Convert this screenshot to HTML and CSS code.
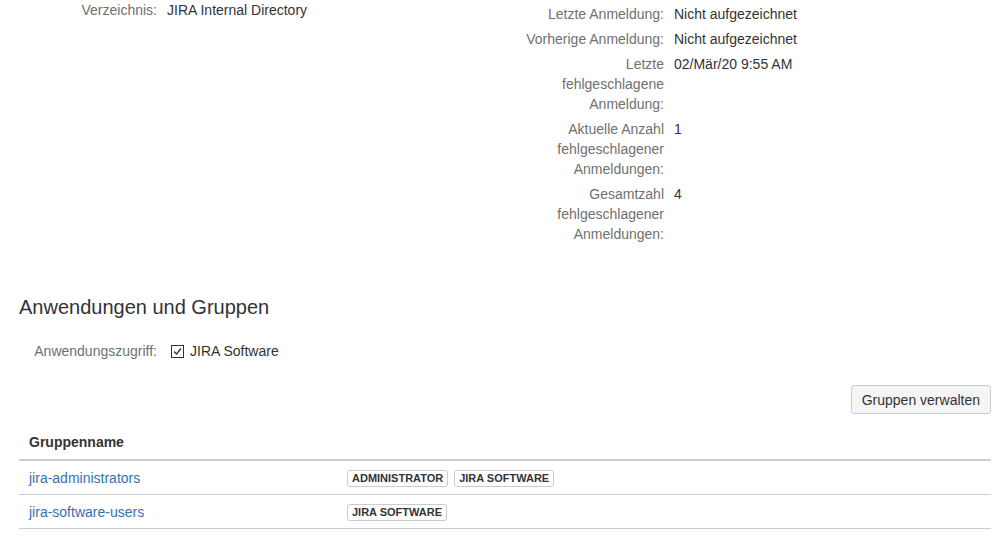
FILE: index.html
```html
<!DOCTYPE html>
<html lang="de">
<head>
  <meta charset="UTF-8" />
  <title>Benutzer</title>
  <link rel="stylesheet" href="styles.css">
</head>
<body>

  <div class="details">
    <div class="detail-col detail-left">
      <div class="detail-label">Verzeichnis:</div>
      <div class="detail-value">JIRA Internal Directory</div>
    </div>

    <div class="detail-col detail-right">
      <div class="detail-label">Letzte Anmeldung:</div>
      <div class="detail-value">Nicht aufgezeichnet</div>

      <div class="detail-label">Vorherige Anmeldung:</div>
      <div class="detail-value">Nicht aufgezeichnet</div>

      <div class="detail-label">Letzte fehlgeschlagene Anmeldung:</div>
      <div class="detail-value">02/Mär/20 9:55 AM</div>

      <div class="detail-label">Aktuelle Anzahl fehlgeschlagener Anmeldungen:</div>
      <div class="detail-value">1</div>

      <div class="detail-label">Gesamtzahl fehlgeschlagener Anmeldungen:</div>
      <div class="detail-value">4</div>
    </div>
  </div>

  <h2 class="section-title">Anwendungen und Gruppen</h2>

  <div class="access-row">
    <div class="detail-label">Anwendungszugriff:</div>
    <div class="detail-value">
      <span class="checkbox">
        <svg width="13" height="13" viewBox="0 0 13 13">
          <rect x="0.5" y="0.5" width="12" height="12" fill="#fff" stroke="#333" />
          <path d="M3 6.5 L5.5 9 L10 3.5" fill="none" stroke="#333" stroke-width="1.3" />
        </svg>
      </span>
      JIRA Software
    </div>
  </div>

  <div class="toolbar">
    <button class="btn">Gruppen verwalten</button>
  </div>

  <table class="groups">
    <thead>
      <tr>
        <th class="col-name">Gruppenname</th>
        <th></th>
      </tr>
    </thead>
    <tbody>
      <tr>
        <td><a href="#">jira-administrators</a></td>
        <td>
          <span class="lozenge">Administrator</span>
          <span class="lozenge">JIRA Software</span>
        </td>
      </tr>
      <tr>
        <td><a href="#">jira-software-users</a></td>
        <td>
          <span class="lozenge">JIRA Software</span>
        </td>
      </tr>
    </tbody>
  </table>

</body>
</html>
```

FILE: styles.css
```css
body {
  margin: 0;
  padding: 0 8px 0 19px;
  font-family: 'Liberation Sans', Arial, sans-serif;
  font-size: 14px;
  line-height: 20px;
  color: #333;
  background: #fff;
}

.details {
  display: flex;
  height: 246px;
}

.detail-col {
  display: grid;
  column-gap: 10px;
  row-gap: 5px;
  align-content: start;
}

.detail-left {
  grid-template-columns: 138px auto;
  width: 503px;
}

.detail-right {
  grid-template-columns: 142px auto;
  padding-top: 4px;
}

.detail-label {
  color: #707070;
  text-align: right;
}

.detail-value {
  color: #333;
}

.section-title {
  margin: 49px 0 0;
  font-size: 20px;
  line-height: 24px;
  font-weight: normal;
  color: #333;
}

.access-row {
  display: grid;
  grid-template-columns: 138px auto;
  column-gap: 14px;
  margin-top: 22px;
}

.access-row .detail-value {
  display: flex;
  align-items: center;
  gap: 6px;
}

.checkbox {
  display: inline-flex;
  margin-top: 1px;
}

.toolbar {
  display: flex;
  justify-content: flex-end;
  margin-top: 24px;
}

.btn {
  height: 29px;
  padding: 0 10px;
  font-family: 'Liberation Sans', Arial, sans-serif;
  font-size: 14px;
  color: #333;
  background: #f5f5f5;
  border: 1px solid #ccc;
  border-radius: 3px;
  cursor: pointer;
}

.groups {
  width: 972px;
  margin-top: 11px;
  border-collapse: collapse;
}

.groups th {
  text-align: left;
  font-weight: bold;
  color: #333;
  padding: 7px 10px 7px;
  border-bottom: 2px solid #ccc;
}

.groups .col-name {
  width: 298px;
}

.groups td {
  padding: 7px 10px 6px;
  border-bottom: 1px solid #ccc;
  vertical-align: middle;
}

.groups a {
  color: #3572b0;
  text-decoration: none;
}

.lozenge {
  display: inline-block;
  padding: 0 4px;
  margin-right: 2px;
  font-size: 11px;
  line-height: 15px;
  font-weight: bold;
  text-transform: uppercase;
  color: #333;
  border: 1px solid #ccc;
  border-radius: 3px;
  vertical-align: 1px;
}
```
